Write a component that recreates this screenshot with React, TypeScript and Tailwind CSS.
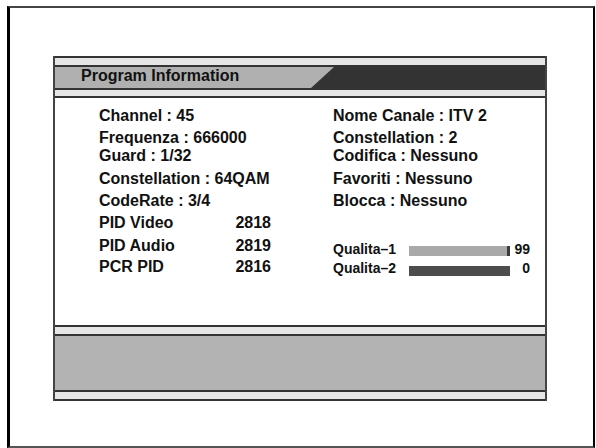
import React from 'react';

const font = { fontFamily: '"Liberation Sans", Arial, Helvetica, sans-serif' };

function Line() {
  return <div className="h-[2px] bg-[#333333]" />;
}

function Strip({ h }: { h: string }) {
  return <div className={`${h} bg-[#e6e6e6]`} />;
}

function QualityRow({ label, value, mt, children }: { label: string; value: string; mt: string; children: React.ReactNode }) {
  return (
    <div className="flex h-[19px] items-start text-[14px] leading-[19px]">
      <span className="w-[76px]">{label}</span>
      <div className={`${mt} flex h-[10px] w-[101px]`}>{children}</div>
      <span className="w-[20px] text-right">{value}</span>
    </div>
  );
}

export default function App() {
  return (
    <div className="h-[448px] w-[596px] bg-white pl-[7px] pt-[6px]" style={font}>
      <div className="h-[442px] w-[588px] border-b-2 border-l-[3px] border-r-2 border-t-2 border-b-[#555555] border-l-black border-r-black border-t-[#444444] pl-[43px] pt-[48px]">
        <div className="w-[494px] border-x-2 border-[#444444] font-bold text-[#111111]">
          <Line />
          <Strip h="h-[7px]" />
          <Line />

          {/* header bar with slanted dark section */}
          <div className="flex h-[21px]">
            <div className="w-[256px] bg-[#b0b0b0] pl-[26px] text-[16px] leading-[18px]">Program Information</div>
            <svg width="23" height="21" viewBox="0 0 23 21" className="block shrink-0">
              <rect width="23" height="21" fill="#b0b0b0" />
              <polygon points="23,0 23,21 0,21" fill="#333333" />
            </svg>
            <div className="flex-1 bg-[#333333]" />
          </div>

          <Line />
          <Strip h="h-[6px]" />
          <Line />

          {/* info content */}
          <div className="flex h-[227px] bg-white pl-[44px] pt-[7px] text-[16px]">
            <div className="w-[234px] leading-[22px]">
              <div className="h-[22px]">Channel : 45</div>
              <div className="h-[18px]">Frequenza : 666000</div>
              <div className="h-[23px]">Guard : 1/32</div>
              <div className="h-[22px]">Constellation : 64QAM</div>
              <div className="h-[22px]">CodeRate : 3/4</div>
              <div className="flex h-[23px] w-[172px] justify-between">
                <span>PID Video</span>
                <span>2818</span>
              </div>
              <div className="flex h-[21px] w-[172px] justify-between">
                <span>PID Audio</span>
                <span>2819</span>
              </div>
              <div className="flex h-[22px] w-[172px] justify-between">
                <span>PCR PID</span>
                <span>2816</span>
              </div>
            </div>
            <div className="flex flex-col leading-[22px]">
              <div className="h-[22px]">Nome Canale : ITV 2</div>
              <div className="h-[18px]">Constellation : 2</div>
              <div className="h-[23px]">Codifica : Nessuno</div>
              <div className="h-[22px]">Favoriti : Nessuno</div>
              <div className="h-[22px]">Blocca : Nessuno</div>
              <div className="mt-[28px]">
                <QualityRow label="Qualita–1" value="99" mt="mt-[6px]">
                  <div className="flex-1 bg-[#a9a9a9]" />
                  <div className="w-[3px] bg-[#3c3c3c]" />
                </QualityRow>
                <QualityRow label="Qualita–2" value="0" mt="mt-[7px]">
                  <div className="flex-1 bg-[#4d4d4d]" />
                </QualityRow>
              </div>
            </div>
          </div>

          <Line />
          <Strip h="h-[7px]" />
          <Line />
          <div className="h-[54px] bg-[#b3b3b3]" />
          <Line />
          <Strip h="h-[7px]" />
          <Line />
        </div>
      </div>
    </div>
  );
}
